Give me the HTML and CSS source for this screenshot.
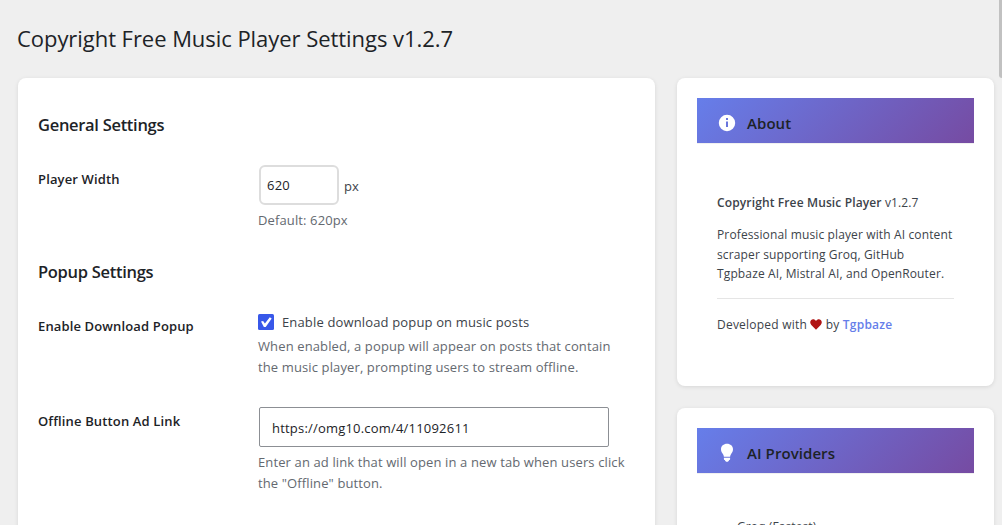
FILE: index.html
```html
<!DOCTYPE html>
<html lang="en">
<head>
    <meta charset="UTF-8">
    <meta name="viewport" content="width=device-width, initial-scale=1.0">
    <title>Copyright Free Music Player Settings</title>
    <link rel="stylesheet" href="styles.css">
</head>
<body>
    <div class="scroll-thumb"></div>
    <h1>Copyright Free Music Player Settings v1.2.7</h1>
    <div class="settings-container">
        <form class="card settings-main">
            <h2>General Settings</h2>
            <div class="form-row">
                <label class="row-title" for="player-width">Player Width</label>
                <div class="row-field">
                    <div class="input-line">
                        <input type="text" id="player-width" class="small-text" value="620">
                        <span class="unit">px</span>
                    </div>
                    <p class="description">Default: 620px</p>
                </div>
            </div>
            <h2 class="popup-title">Popup Settings</h2>
            <div class="form-row">
                <span class="row-title">Enable Download Popup</span>
                <div class="row-field">
                    <label class="check-line">
                        <input type="checkbox" class="check-input" checked>
                        <svg viewBox="0 0 16 16" width="16" height="16">
                            <rect width="16" height="16" rx="1.5" fill="#3858e9"/>
                            <path d="M3 7.600L5.100 7.100L6.900 9.500L11.800 3.200L13.700 4.500L7.700 13H5.900z" fill="#fff"/>
                        </svg>
                        <span class="check-text">Enable download popup on music posts</span>
                    </label>
                    <p class="description">When enabled, a popup will appear on posts that contain<br>the music player, prompting users to stream offline.</p>
                </div>
            </div>
            <div class="form-row link-row">
                <label class="row-title" for="ad-link">Offline Button Ad Link</label>
                <div class="row-field">
                    <input type="text" id="ad-link" class="regular-text" value="https://omg10.com/4/11092611">
                    <p class="description">Enter an ad link that will open in a new tab when users click<br>the "Offline" button.</p>
                </div>
            </div>
        </form>
        <div class="settings-sidebar">
            <div class="card about-card">
                <h3>
                    <svg viewBox="0 0 20 20" width="20" height="20">
                        <path fill="#fff" fill-rule="evenodd" d="M10 1.800a8.200 8.200 0 1 0 0 16.400A8.200 8.200 0 0 0 10 1.800zM9 5h2v2H9zM9 8.400h2V14H9z"/>
                    </svg>
                    <span>About</span>
                </h3>
                <div class="inside">
                    <p class="product"><strong>Copyright Free Music Player</strong> v1.2.7</p>
                    <p class="summary">Professional music player with AI content<br>scraper supporting Groq, GitHub<br>Tgpbaze AI, Mistral AI, and OpenRouter.</p>
                    <hr>
                    <p class="credit">Developed with <svg class="heart" viewBox="0 0 12 11" width="12" height="11"><path fill="#b01414" d="M6 10.700L1.300 6C-.2 4.400 0 2.300 1 1.200 2.400-.2 4.800 0 6 2 7.200 0 9.600-.2 11 1.200c1 1.100 1.200 3.200-.3 4.800z"/></svg> by <a href="#">Tgpbaze</a></p>
                </div>
            </div>
            <div class="card">
                <h3>
                    <svg viewBox="0 0 20 20" width="20" height="20">
                        <path fill="#fff" d="M10 .800c3.400 0 6 2.300 6 5.500 0 2-1 3.400-1.900 4.800-.5.900-.9 1.700-1 2.700H6.900c-.1-1-.5-1.800-1-2.700C5 9.700 4 8.300 4 6.300 4 3.100 6.600.800 10 .800zM6.900 14.800h6.200v1.500c0 .4-.3.700-.7.700h-.3c-.2 1-1 1.800-2.100 1.800s-1.900-.8-2.100-1.800h-.3c-.4 0-.7-.3-.7-.7z"/>
                    </svg>
                    <span>AI Providers</span>
                </h3>
                <ul>
                    <li>Groq (Fastest)</li>
                </ul>
            </div>
        </div>
    </div>
</body>
</html>
```
FILE: styles.css
```css
* {
    box-sizing: border-box;
}
body {
    font-family: "Segoe UI", "Open Sans", sans-serif;
    font-size: 13px;
    margin: 0;
    padding: 0 8px 0 17px;
    height: 525px;
    overflow: hidden;
    background-color: #efefef;
    color: #3c434a;
}
.scroll-thumb {
    position: absolute;
    top: 0;
    right: 0;
    width: 3px;
    height: 78px;
    background-color: #c1c1c1;
    border-bottom-left-radius: 3px;
}
h1 {
    margin: 0;
    padding-top: 23px;
    height: 78px;
    font-size: 22px;
    line-height: 30px;
    font-weight: 400;
    letter-spacing: -0.05px;
    color: #1d2327;
    white-space: nowrap;
}
.settings-container {
    display: grid;
    grid-template-columns: 637px 317px;
    gap: 22px;
    height: 447px;
    margin-left: 1px;
}
.card {
    background-color: #ffffff;
    border-radius: 8px;
    padding: 20px;
    box-shadow: 0 1px 4px rgba(0, 0, 0, 0.1);
}
.settings-main {
    height: 520px;
}
.settings-sidebar {
    display: flex;
    flex-direction: column;
    gap: 22px;
}
h2 {
    margin: 15px 0 0;
    font-size: 16.5px;
    line-height: 24px;
    font-weight: 600;
    letter-spacing: -0.3px;
    color: #1d2327;
}
.form-row {
    display: grid;
    grid-template-columns: 220px 1fr;
    margin-top: 28px;
}
.row-title {
    padding-top: 4px;
    font-size: 13px;
    line-height: 20px;
    font-weight: 600;
    letter-spacing: 0.14px;
    color: #1d2327;
}
.input-line {
    display: flex;
    align-items: center;
    gap: 5px;
}
input[type="text"] {
    font-family: inherit;
    font-size: 13px;
    letter-spacing: 0.2px;
    height: 40px;
    margin-left: 1px;
    color: #1d2327;
    background-color: #ffffff;
}
.small-text {
    width: 80px;
    padding: 0 6px;
    border: 2px solid #dddddd;
    border-radius: 6px;
}
.regular-text {
    display: block;
    width: 350px;
    padding: 2px 12px 0;
    border: 1px solid #8c8f94;
    border-radius: 2px;
}
.unit {
    padding-top: 1px;
}
.description {
    margin: 5px 0 0;
    line-height: 21px;
    letter-spacing: 0.12px;
    color: #646970;
    white-space: nowrap;
}
.popup-title {
    margin-top: 29px;
}
.check-line {
    display: flex;
    align-items: center;
    gap: 8px;
    height: 20px;
    letter-spacing: 0.15px;
}
.check-input {
    display: none;
}
.check-line + .description {
    margin-top: 4px;
}
.link-row {
    margin-top: 29px;
}
h3 {
    display: flex;
    align-items: center;
    gap: 10px;
    margin: 0;
    padding: 5px 20px 0;
    height: 45px;
    font-size: 15px;
    font-weight: 600;
    letter-spacing: 0.07px;
    color: #1d2327;
    background: linear-gradient(135deg, #667eea 0%, #764ba2 100%);
    box-shadow: 0 1px 0 #f0f0f0;
}
.about-card {
    height: 308px;
}
.inside {
    padding: 50px 20px 0;
    line-height: 20px;
    font-size: 12px;
    letter-spacing: 0.13px;
    white-space: nowrap;
}
.inside p {
    margin: 0;
}
.inside .summary {
    margin-top: 12px;
    line-height: 19.5px;
}
.inside .credit {
    letter-spacing: 0.22px;
}
strong {
    font-weight: 600;
}
hr {
    margin: 14px 0 16px;
    border: 0;
    border-top: 1px solid #e5e5e5;
}
.heart {
    vertical-align: -1px;
}
a {
    color: #667eea;
    font-weight: 600;
    text-decoration: none;
}
ul {
    margin: 0;
    padding: 44px 40px 0;
    font-size: 12px;
    line-height: 20px;
    letter-spacing: 0.1px;
    list-style: none;
}
```
